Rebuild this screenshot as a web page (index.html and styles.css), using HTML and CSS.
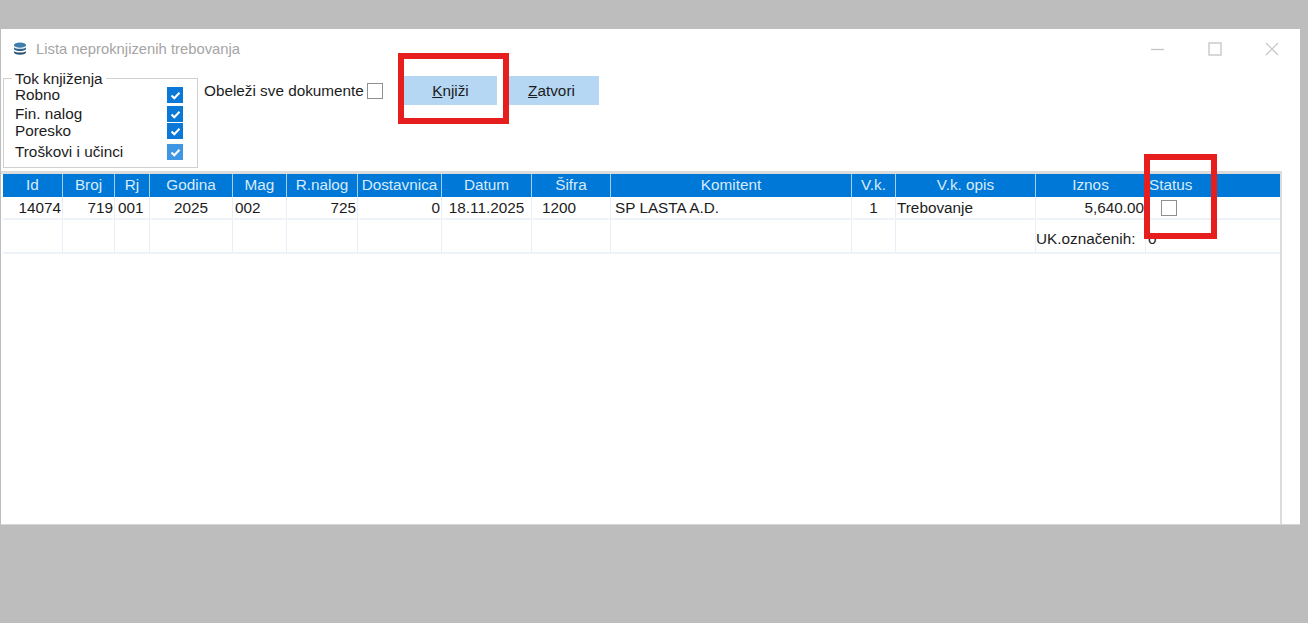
FILE: index.html
```html
<!DOCTYPE html>
<html lang="sr">
<head>
<meta charset="utf-8">
<title>Lista neproknjizenih trebovanja</title>
<link rel="stylesheet" href="styles.css">
</head>
<body>
<div class="window">
  <div class="titlebar">
    <svg class="app-icon" width="16" height="14" viewBox="0 0 16 14">
      <ellipse cx="8" cy="3.2" rx="6" ry="2.6" fill="#3f7fae"/>
      <path d="M2 5.2c1 2 11 2 12 0v2c-1 2.400-11 2.400-12 0z" fill="#33658c"/>
      <path d="M2 9c1 2 11 2 12 0v1.600c-1 3-11 3-12 0z" fill="#274f70"/>
    </svg>
    <span class="title">Lista neproknjizenih trebovanja</span>
    <div class="controls">
      <svg width="14" height="14" viewBox="0 0 14 14"><path d="M0 7.500h13" stroke="#c4c4c4" stroke-width="1.300"/></svg>
      <svg width="14" height="14" viewBox="0 0 14 14"><rect x="1" y="1" width="12" height="12" fill="none" stroke="#c4c4c4" stroke-width="1.300"/></svg>
      <svg width="14" height="14" viewBox="0 0 14 14"><path d="M1 1l12 12M13 1L1 13" stroke="#c4c4c4" stroke-width="1.200"/></svg>
    </div>
  </div>
  <div class="toolbar">
    <fieldset class="flow">
      <legend>Tok knjiženja</legend>
      <div class="flow-row r1"><span>Robno</span><span class="cb"><svg width="11" height="9" viewBox="0 0 11 9"><path d="M1.500 4.500l2.800 2.800 5.200-5.600" fill="none" stroke="#fff" stroke-width="2"/></svg></span></div>
      <div class="flow-row r2"><span>Fin. nalog</span><span class="cb"><svg width="11" height="9" viewBox="0 0 11 9"><path d="M1.500 4.500l2.800 2.800 5.200-5.600" fill="none" stroke="#fff" stroke-width="2"/></svg></span></div>
      <div class="flow-row r3"><span>Poresko</span><span class="cb"><svg width="11" height="9" viewBox="0 0 11 9"><path d="M1.500 4.500l2.800 2.800 5.200-5.600" fill="none" stroke="#fff" stroke-width="2"/></svg></span></div>
      <div class="flow-row r4"><span>Troškovi i učinci</span><span class="cb light"><svg width="11" height="9" viewBox="0 0 11 9"><path d="M1.500 4.500l2.800 2.800 5.200-5.600" fill="none" stroke="#fff" stroke-width="2"/></svg></span></div>
    </fieldset>
    <div class="mark-all"><span>Obeleži sve dokumente</span><span class="box"></span></div>
    <button class="btn knjizi" type="button"><u>K</u>njiži</button>
    <button class="btn zatvori" type="button"><u>Z</u>atvori</button>
  </div>
  <div class="grid-wrap">
    <div class="grid head">
      <div>Id</div><div>Broj</div><div>Rj</div><div>Godina</div><div>Mag</div><div>R.nalog</div><div>Dostavnica</div><div>Datum</div><div>Šifra</div><div>Komitent</div><div>V.k.</div><div>V.k. opis</div><div>Iznos</div><div class="status-h">Status</div>
    </div>
    <div class="grid row">
      <div class="right">14074</div><div class="right">719</div><div class="rj">001</div><div class="c">2025</div><div class="mag">002</div><div class="right">725</div><div class="right">0</div><div class="c">18.11.2025</div><div class="sifra">1200</div><div class="pad">SP LASTA A.D.</div><div class="c">1</div><div class="left">Trebovanje</div><div class="right">5,640.00</div><div class="status-c"><span class="box"></span></div>
    </div>
    <div class="grid row total">
      <div></div><div></div><div></div><div></div><div></div><div></div><div></div><div></div><div></div><div></div><div></div><div></div><div>UK.označenih:</div><div class="count">0</div>
    </div>
  </div>
</div>
<div class="mark mark-a"></div>
<div class="mark mark-b"></div>
</body>
</html>
```
FILE: styles.css
```css
* { box-sizing: border-box; }
html, body { margin: 0; height: 100%; }
body {
  width: 1308px;
  height: 623px;
  overflow: hidden;
  background: #bdbdbd;
  padding: 29px 8px 0 1px;
  position: relative;
  font-family: "Liberation Sans", Arial, sans-serif;
  font-size: 15.3px;
  color: #1c1c1c;
}
.window {
  height: 496px;
  background: #fff;
  display: flex;
  flex-direction: column;
  border-bottom: 1px solid #d6d6d6;
}
.titlebar {
  height: 36px;
  display: flex;
  align-items: center;
  padding: 3px 21px 0 11px;
  flex: none;
}
.app-icon { margin-right: 8px; }
.title { color: #a5a5a5; font-size: 14.8px; }
.controls { margin-left: auto; display: flex; gap: 43px; }
.toolbar { display: flex; align-items: flex-start; height: 106px; flex: none; }
.flow {
  width: 195px;
  height: 96px;
  margin: 7px 0 0 2px;
  padding: 0;
  border: 1px solid #d0d0d0;
}
.flow legend { padding: 0 3px; margin-left: 8px; line-height: 13px; }
.flow-row {
  display: flex;
  justify-content: space-between;
  align-items: center;
  height: 18px;
  padding: 0 14px 0 11px;
}
.r1 { margin-top: 1px; }
.r2 { margin-top: 1px; }
.r3 { margin-top: -1px; }
.r4 { margin-top: 3px; }
.cb {
  width: 16px;
  height: 16px;
  background: #0a78d7;
  display: flex;
  align-items: center;
  justify-content: center;
}
.cb.light { background: #3f97e3; }
.box {
  display: block;
  flex: none;
  width: 16px;
  height: 16px;
  border: 1px solid #8f8f8f;
  background: #fff;
}
.mark-all { display: flex; align-items: center; gap: 3px; margin: 17px 0 0 6px; width: 200px; white-space: nowrap; }
.btn {
  height: 29px;
  margin-top: 11px;
  border: 0;
  padding: 0;
  background: #b5d7f3;
  font: inherit;
  color: #1c1c1c;
}
.knjizi { width: 93px; }
.zatvori { width: 90px; margin-left: 12px; padding-right: 5px; }
.grid-wrap {
  flex: 1;
  width: 1281px;
  border-top: 3px solid #dcdcdc;
  border-right: 2px solid #dcdcdc;
  padding: 0 0 0 2px;
}
.grid {
  display: grid;
  grid-template-columns: 60px 52px 35px 83px 54px 71px 84px 90px 79px 241px 44px 140px 110px 134px;
}
.head { height: 23px; background: #0078d7; color: #d8ebfa; }
.head > div {
  text-align: center;
  line-height: 21px;
  border-right: 1px solid #a5cfef;
  white-space: nowrap;
}
.head > div:last-child { border-right: 0; }
.head .status-h { text-align: left; padding-left: 3px; }
.row { height: 23px; border-bottom: 2px solid #eef3fa; }
.row > div { border-right: 1px solid #e8eff8; line-height: 22px; white-space: nowrap; overflow: hidden; }
.row > div:last-child { border-right: 0; }
.total { height: 34px; }
.total > div { line-height: 38px; }
.c { text-align: center; }
.right { text-align: right; padding-right: 1px; }
.left { padding-left: 1px; }
.rj { padding-left: 3px; }
.mag { padding-left: 2px; }
.sifra { padding-left: 10px; }
.pad { padding-left: 4px; }
.count { padding-left: 2px; }
.status-c { padding: 3px 0 0 15px; }
.mark { position: absolute; border: 6px solid #e61e1e; }
.mark-a { left: 398px; top: 53px; width: 111px; height: 71px; }
.mark-b { left: 1144px; top: 154px; width: 73px; height: 85px; }
```
